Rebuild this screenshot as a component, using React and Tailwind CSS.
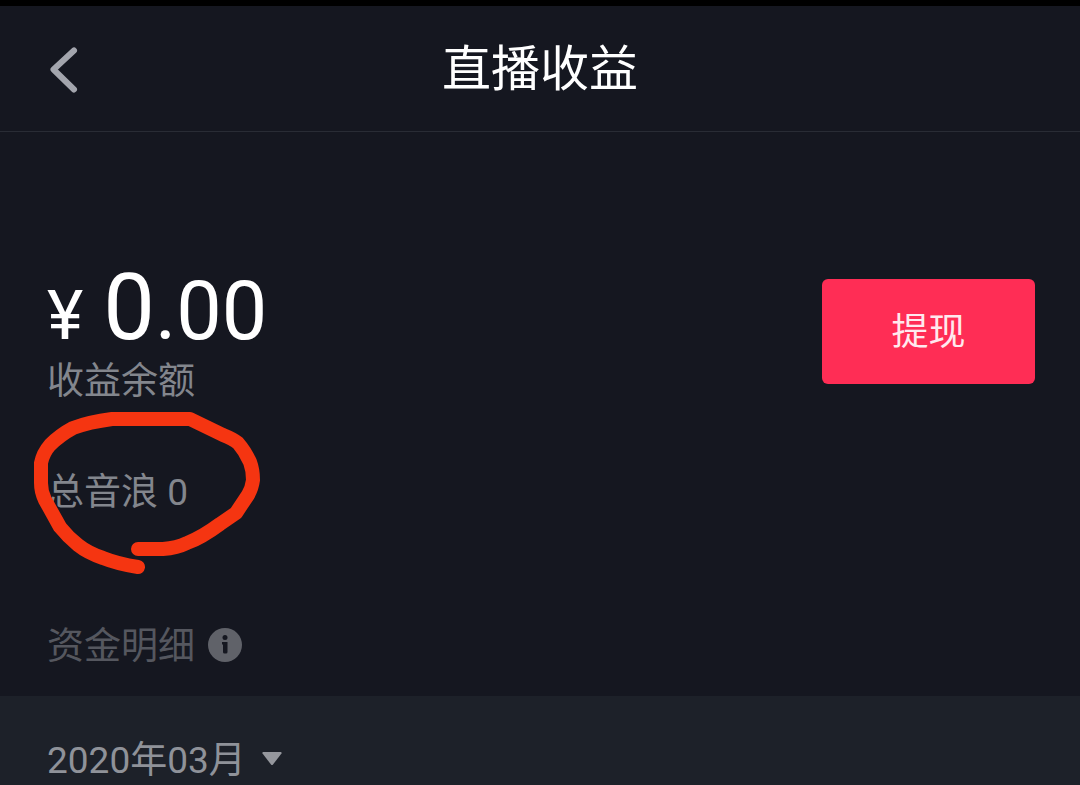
function BackIcon() {
  return (
    <svg viewBox="0 0 32 48" className="h-12 w-8" fill="none" stroke="#a3a5ad" strokeWidth="6" strokeLinecap="round" strokeLinejoin="round" aria-hidden="true">
      <path d="M26 4.500 5.500 23.500 26 43.500" />
    </svg>
  );
}

function InfoIcon() {
  return (
    <svg viewBox="0 0 34 34" className="size-[34px]" aria-hidden="true">
      <circle cx="17" cy="17" r="17" fill="#606269" />
      <circle cx="17" cy="9.500" r="2.500" fill="#151720" />
      <path d="M14 14h5.500V24q0 1.500-1.500 1.500h-1.500q-1.500 0-1.500-1.500v-7.500h-1z" fill="#151720" />
    </svg>
  );
}

function MarkerLoop() {
  return (
    <svg
      viewBox="0 0 240 170"
      className="pointer-events-none absolute -left-4 -top-[58px] h-[170px] w-[240px]"
      fill="none"
      stroke="#f53511"
      strokeWidth="14"
      strokeLinecap="round"
      strokeLinejoin="round"
      aria-hidden="true"
    >
      <path d="M107 159Q87 156 72 150Q57 145 47 137Q37 129 29 119L14 92Q10 84 10 75V55Q12 45 19 37Q29 27 42 20Q58 14 81 11H159L192 27Q202 31 207 35Q214 43 219 54Q222 62 222 72Q221 80 217 87L205 105L189 116Q170 130 156 135Q146 140 132 141H107" />
    </svg>
  );
}

export default function App() {
  return (
    <div className="flex min-h-screen flex-col border-t-[6px] border-black bg-[#151720] font-['Roboto','Noto_Sans_CJK_SC',sans-serif] text-[37px] leading-[54px] text-[#83868d]">
      <header className="grid h-[126px] grid-cols-[1fr_auto_1fr] items-center border-b border-[#292c35] px-12 pt-0.5">
        <button type="button" aria-label="返回" className="justify-self-start">
          <BackIcon />
        </button>
        <h1 className="text-[49px] leading-[72px] text-white">直播收益</h1>
      </header>

      <main className="flex grow flex-col">
        <section className="px-[47px] pt-[137px]">
          <div className="flex items-start justify-between">
            <div>
              <p className="flex items-baseline leading-[78px] text-white">
                <span className="mr-5 text-[69px]">¥</span>
                <span className="text-[92px]">0</span>
                <span className="text-[81px]">.00</span>
              </p>
              <p>收益余额</p>
            </div>
            <button type="button" className="-mr-0.5 mt-2.5 h-[105px] w-[213px] rounded-md bg-[#ff2d55] pt-0.5 text-[#ffe9ee]">
              提现
            </button>
          </div>
          <div className="relative mt-[57px]">
            <p>总音浪 0</p>
            <MarkerLoop />
          </div>
          <div className="mt-24 flex items-center gap-[13px] pb-[22px] text-[#55575f]">
            <h2 className="pt-1">资金明细</h2>
            <button type="button" aria-label="资金明细说明">
              <InfoIcon />
            </button>
          </div>
        </section>

        <section className="grow bg-[#1d2129] px-[47px] pt-[34px]">
          <div className="flex items-center gap-4">
            <select aria-label="月份" className="appearance-none bg-transparent pt-1 text-[#8f9299]">
              <option>2020年03月</option>
            </select>
            <svg viewBox="0 0 20 14" className="h-3.5 w-5" fill="#95979d" aria-hidden="true">
              <path d="M1 0h18q1 .5.500 1.500L11 12.500q-1 1-2 0L.5 1.500Q0 .5 1 0z" />
            </svg>
          </div>
        </section>
      </main>
    </div>
  );
}
